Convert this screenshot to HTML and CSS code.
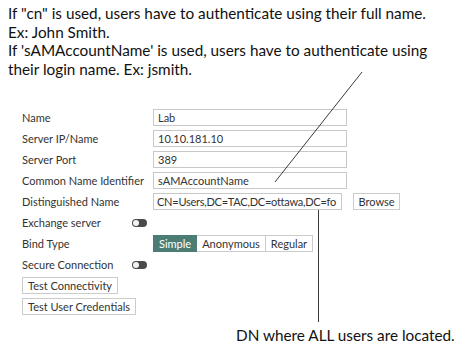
FILE: index.html
```html
<!DOCTYPE html>
<html lang="en">
<head>
    <meta charset="UTF-8">
    <title>LDAP Server</title>
    <link rel="stylesheet" href="styles.css">
</head>
<body>
    <div class="page">
        <p class="note">If "cn" is used, users have to authenticate using their full name.<br>
        Ex: John Smith.<br>
        If 'sAMAccountName' is used, users have to authenticate using<br>
        their login name. Ex: jsmith.</p>

        <div class="form">
            <div class="label">Name</div>
            <div class="field"><div class="box">Lab</div></div>

            <div class="label">Server IP/Name</div>
            <div class="field"><div class="box">10.10.181.10</div></div>

            <div class="label">Server Port</div>
            <div class="field"><div class="box">389</div></div>

            <div class="label">Common Name Identifier</div>
            <div class="field"><div class="box">sAMAccountName</div></div>

            <div class="label">Distinguished Name</div>
            <div class="field">
                <div class="box box-dn">CN=Users,DC=TAC,DC=ottawa,DC=fo</div>
                <div class="btn browse">Browse</div>
            </div>

            <div class="label">Exchange server</div>
            <div class="field toggle-cell"><span class="toggle"></span></div>

            <div class="label">Bind Type</div>
            <div class="field">
                <div class="segments">
                    <span class="seg active">Simple</span>
                    <span class="seg">Anonymous</span>
                    <span class="seg">Regular</span>
                </div>
            </div>

            <div class="label">Secure Connection</div>
            <div class="field toggle-cell"><span class="toggle"></span></div>

            <div class="wide"><div class="btn">Test Connectivity</div></div>
            <div class="wide"><div class="btn">Test User Credentials</div></div>
        </div>

        <p class="caption">DN where ALL users are located.</p>

        <!-- annotation lines drawn over the form -->
        <svg class="arrows" width="457" height="349" viewBox="0 0 457 349">
            <line x1="362" y1="72" x2="275" y2="182" stroke="#3a3a3a" stroke-width="1"/>
            <line x1="318.5" y1="210" x2="318.5" y2="322" stroke="#3a3a3a" stroke-width="1"/>
        </svg>
    </div>
</body>
</html>
```

FILE: styles.css
```css
body {
    margin: 0;
    padding: 0;
    background: #ffffff;
}
.page {
    position: relative;
    width: 457px;
    height: 349px;
    overflow: hidden;
}
.note {
    margin: 0;
    padding: 4px 0 0 8px;
    font-family: Lato, "Open Sans", sans-serif;
    font-size: 15.3px;
    line-height: 18.5px;
    color: #111111;
    white-space: nowrap;
}
.form {
    display: grid;
    grid-template-columns: 131px auto;
    grid-auto-rows: 17px;
    row-gap: 4px;
    margin-top: 31px;
    padding-left: 22px;
    font-family: Lato, "Open Sans", sans-serif;
    font-size: 11px;
    color: #333333;
}
.label {
    display: flex;
    align-items: center;
    white-space: nowrap;
}
.field {
    display: flex;
    align-items: center;
    gap: 11px;
}
.box {
    width: 194px;
    height: 17px;
    box-sizing: border-box;
    border: 1px solid #c8c8c8;
    padding: 0 4px;
    line-height: 15px;
    white-space: nowrap;
    overflow: hidden;
}
.box-dn {
    width: 189px;
    padding: 0 3px;
    letter-spacing: -0.25px;
}
.btn {
    display: inline-block;
    height: 17px;
    box-sizing: border-box;
    border: 1px solid #cccccc;
    padding: 0 5px;
    line-height: 15px;
    background: #ffffff;
    white-space: nowrap;
}
.browse {
    width: 47px;
    text-align: center;
    padding: 0;
}
.wide {
    grid-column: 1 / 3;
}
.toggle-cell {
    margin-left: -21px;
}
.toggle {
    position: relative;
    display: inline-block;
    width: 15px;
    height: 8px;
    border-radius: 4px;
    background: #4a4a4a;
}
.toggle::before {
    content: "";
    position: absolute;
    left: 1px;
    top: 1px;
    width: 6px;
    height: 6px;
    border-radius: 50%;
    background: #f2f2f2;
}
.segments {
    display: flex;
    height: 17px;
}
.seg {
    box-sizing: border-box;
    height: 17px;
    border: 1px solid #cccccc;
    border-left: none;
    padding: 0 5px;
    line-height: 15px;
    background: #ffffff;
}
.seg:first-child {
    border-left: 1px solid #cccccc;
}
.seg.active {
    background: #4b7d75;
    border-color: #4b7d75;
    color: #ffffff;
}
.caption {
    margin: 11px 0 0 236px;
    font-family: Lato, "Open Sans", sans-serif;
    font-size: 15.3px;
    line-height: 18px;
    color: #111111;
    white-space: nowrap;
}
.arrows {
    position: absolute;
    left: 0;
    top: 0;
    pointer-events: none;
}
```
